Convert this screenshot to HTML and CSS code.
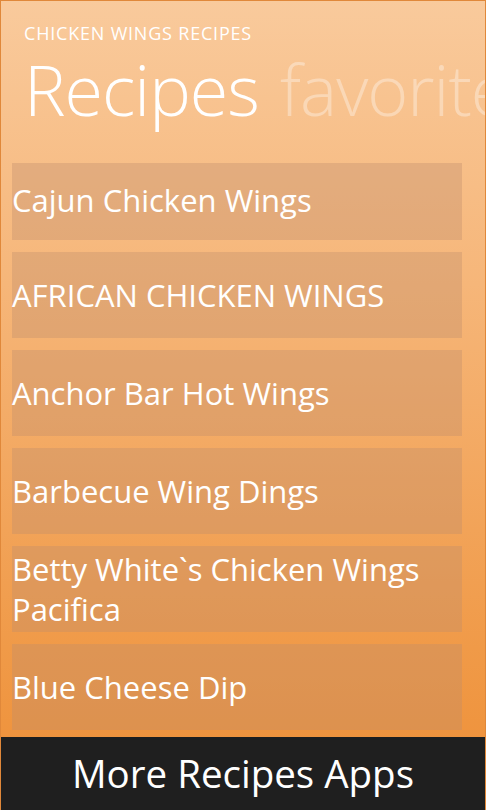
FILE: index.html
```html
<!DOCTYPE html>
<html lang="en">
<head>
  <meta charset="UTF-8" />
  <title>Chicken Wings Recipes</title>
  <link rel="stylesheet" href="styles.css">
</head>
<body>
  <div class="app">
    <div class="header">
      <div class="app-title">CHICKEN WINGS RECIPES</div>
      <div class="pivot">
        <span class="pivot-item active">Recipes</span>
        <span class="pivot-item">favorites</span>
      </div>
    </div>

    <div class="list">
      <div class="item first">Cajun Chicken Wings</div>
      <div class="item">AFRICAN CHICKEN WINGS</div>
      <div class="item">Anchor Bar Hot Wings</div>
      <div class="item">Barbecue Wing Dings</div>
      <div class="item">Betty White`s Chicken Wings Pacifica</div>
      <div class="item">Blue Cheese Dip</div>
    </div>

    <div class="bottom-bar">More Recipes Apps</div>
  </div>
</body>
</html>
```

FILE: styles.css
```css
html, body {
  margin: 0;
  padding: 0;
}
body {
  font-family: "Open Sans", "Noto Sans", sans-serif;
  width: 486px;
  height: 810px;
  overflow: hidden;
}
.app {
  box-sizing: border-box;
  height: 810px;
  display: flex;
  flex-direction: column;
  border: 1px solid #e0883a;
  border-bottom: none;
  background: linear-gradient(to bottom, #f9ca9c 0%, #f6b679 35%, #f09a48 80%, #ee8f36 100%);
  color: #fff;
}
.header {
  padding: 20px 0 0 23px;
  white-space: nowrap;
  overflow: hidden;
}
.app-title {
  font-size: 18px;
  line-height: 24px;
  letter-spacing: 0.8px;
}
.pivot {
  font-size: 70px;
  line-height: 90px;
  margin-top: -1px;
  font-weight: 300;
  letter-spacing: -1px;
}
.pivot-item {
  margin-right: 4px;
  color: rgba(255, 255, 255, 0.35);
}
.pivot-item.active {
  color: #fff;
}
.list {
  flex: 1;
  overflow: hidden;
  padding: 29px 23px 0 11px;
  display: flex;
  flex-direction: column;
  gap: 12px;
}
.item {
  flex: none;
  box-sizing: border-box;
  height: 86px;
  display: flex;
  align-items: center;
  font-size: 31px;
  line-height: 40px;
  background: rgba(190, 140, 110, 0.35);
}
.item.first {
  height: 77px;
  padding-bottom: 4px;
}
.bottom-bar {
  flex: none;
  height: 73px;
  background: #1f1f1f;
  text-align: center;
  font-size: 38.5px;
  line-height: 73px;
}
```
